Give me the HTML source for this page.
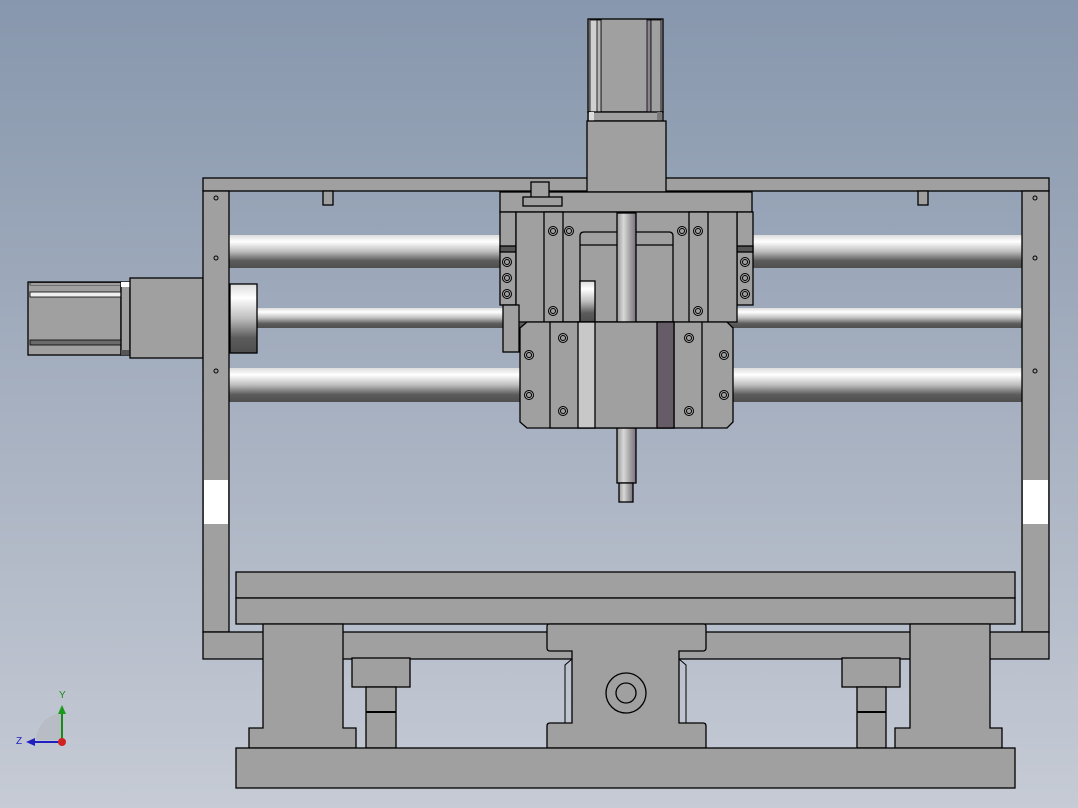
<!DOCTYPE html>
<html><head><meta charset="utf-8"><style>
html,body{margin:0;padding:0;width:1078px;height:808px;overflow:hidden}
svg{display:block}
</style></head><body>
<svg width="1078" height="808" viewBox="0 0 1078 808" xmlns="http://www.w3.org/2000/svg" font-family="Liberation Sans, sans-serif">
<defs>
<linearGradient id="bg" x1="0" y1="0" x2="0" y2="1">
<stop offset="0" stop-color="#8797ad"/><stop offset="0.5" stop-color="#a6b0c0"/><stop offset="1" stop-color="#c6cbd5"/>
</linearGradient>
<linearGradient id="rod" x1="0" y1="0" x2="0" y2="1">
<stop offset="0" stop-color="#dcdcdc"/><stop offset="0.2" stop-color="#ffffff"/><stop offset="0.5" stop-color="#bdbdbd"/><stop offset="0.78" stop-color="#5c5c5c"/><stop offset="1" stop-color="#4e4e4e"/>
</linearGradient>
<linearGradient id="shaft" x1="0" y1="0" x2="1" y2="0">
<stop offset="0" stop-color="#9a9a9a"/><stop offset="0.35" stop-color="#d8d8d8"/><stop offset="0.7" stop-color="#a0a0a0"/><stop offset="1" stop-color="#7a7080"/>
</linearGradient>
<g id="s" fill="none" stroke="#000" stroke-width="1"><circle r="4.5"/><circle r="2.5"/></g>
</defs>
<rect width="1078" height="808" fill="url(#bg)"/>
<g stroke="#000" stroke-width="1.3" fill="#a0a0a0">
<rect x="229" y="235" width="793" height="33" fill="url(#rod)" stroke="none"/>
<rect x="229" y="308" width="793" height="20" fill="url(#rod)" stroke="none"/>
<rect x="229" y="368" width="793" height="34" fill="url(#rod)" stroke="none"/>
<!-- left motor -->
<rect x="28" y="282" width="93" height="73"/>
<rect x="30" y="283" width="91" height="2" fill="#e0e0e0" stroke-width="0.6"/>
<rect x="30" y="292" width="91" height="5" fill="#f0f0f0" stroke-width="0.8"/>
<rect x="30" y="340" width="91" height="5" fill="#6a6a6a" stroke-width="0.8"/>
<rect x="121" y="282" width="9" height="73" fill="#a0a0a0"/>
<rect x="121" y="282" width="9" height="5" fill="#fff" stroke="none"/>
<rect x="121" y="350" width="9" height="5" fill="#555" stroke="none"/>
<rect x="130" y="278" width="73" height="80"/>
<rect x="230" y="284" width="27" height="69" fill="url(#rod)"/>
<!-- frame -->
<rect x="203" y="178" width="846" height="13"/>
<rect x="203" y="191" width="26" height="441"/>
<rect x="1022" y="191" width="27" height="441"/>
<rect x="204" y="480" width="24" height="44" fill="#fff" stroke="none"/>
<rect x="1023" y="480" width="25" height="44" fill="#fff" stroke="none"/>
<rect x="203" y="632" width="846" height="27"/>
<rect x="323" y="191" width="10" height="14"/>
<rect x="918" y="191" width="10" height="14"/>
<!-- top motor -->
<rect x="588" y="19" width="75" height="93"/>
<rect x="590" y="20" width="11" height="92" fill="#d0d0d0" stroke-width="0.8"/>
<rect x="597" y="20" width="4" height="92" fill="#b8b8b8" stroke-width="0.8"/>
<rect x="647" y="20" width="4" height="92" fill="#8a8490" stroke-width="0.8"/>
<rect x="651" y="20" width="10" height="92" fill="#a0a0a0" stroke-width="0.8"/>
<rect x="588" y="112" width="75" height="9" fill="#a0a0a0"/>
<rect x="589" y="112" width="5" height="9" fill="#ddd" stroke="none"/>
<rect x="657" y="112" width="5" height="9" fill="#777" stroke="none"/>
<rect x="587" y="121" width="79" height="71"/>
<!-- carriage -->
<rect x="500" y="192" width="252" height="20"/>
<rect x="531" y="182" width="18" height="16"/>
<rect x="523" y="197" width="39" height="9"/>
<rect x="500" y="212" width="16" height="93"/>
<rect x="500" y="246" width="16" height="6" fill="#555"/>
<rect x="737" y="212" width="16" height="93"/>
<rect x="737" y="246" width="16" height="6" fill="#555"/>
<rect x="516" y="212" width="221" height="110"/>
<path d="M580 322 V236 Q580 232 584 232 H669 Q673 232 673 236 V322" fill="none"/>
<line x1="580" y1="245" x2="673" y2="245"/>
<rect x="580" y="281" width="15" height="41" fill="url(#rod)"/>
<rect x="544" y="212" width="19" height="110"/>
<rect x="689" y="212" width="19" height="110"/>
<rect x="503" y="305" width="16" height="47"/>
<rect x="617" y="213" width="19" height="270" fill="url(#shaft)"/>
<rect x="619" y="483" width="14" height="19" fill="url(#shaft)"/>
<path d="M527 322 H727 L733 328 V422 L727 428 H527 L520 422 V328 Z"/>
<rect x="550" y="322" width="124" height="106" fill="#a0a0a0"/>
<rect x="578" y="322" width="17" height="106" fill="#c8c8c8"/>
<rect x="657" y="322" width="17" height="106" fill="#665c68"/>
<line x1="702" y1="322" x2="702" y2="428"/>
<!-- table -->
<rect x="236" y="572" width="779" height="26"/>
<rect x="236" y="598" width="779" height="26"/>
<path d="M263 624 H343 V728 H356 V748 H249 V728 H263 Z"/>
<path d="M910 624 H990 V728 H1002 V748 H895 V728 H910 Z"/>
<path d="M549 624 H704 Q706 624 706 627 V648 Q706 651 703 651 H679 V723 H703 Q706 723 706 726 V748 H547 V726 Q547 723 550 723 H572 V651 H550 Q547 651 547 648 V627 Q547 624 549 624 Z"/>
<path d="M572 659 L565 665 V723 M679 659 L686 665 V723" fill="none" stroke-width="1"/>
<ellipse cx="626" cy="693" rx="20" ry="20" fill="none"/>
<ellipse cx="626" cy="693" rx="10" ry="10" fill="none"/>
<rect x="352" y="658" width="58" height="29"/>
<rect x="366" y="687" width="30" height="61"/>
<line x1="366" y1="712" x2="396" y2="712" stroke-width="2"/>
<rect x="842" y="658" width="58" height="29"/>
<rect x="857" y="687" width="29" height="61"/>
<line x1="857" y1="712" x2="886" y2="712" stroke-width="2"/>
<rect x="236" y="748" width="779" height="40"/>
</g>
<g fill="none" stroke="#000" stroke-width="1">
<circle cx="216" cy="198" r="2"/><circle cx="216" cy="258" r="2"/><circle cx="216" cy="371" r="2"/>
<circle cx="1035" cy="198" r="2"/><circle cx="1035" cy="258" r="2"/><circle cx="1035" cy="371" r="2"/>
</g>
<use href="#s" x="507" y="262"/><use href="#s" x="507" y="278"/><use href="#s" x="507" y="294"/>
<use href="#s" x="745" y="262"/><use href="#s" x="745" y="278"/><use href="#s" x="745" y="294"/>
<use href="#s" x="553" y="231"/><use href="#s" x="569" y="231"/><use href="#s" x="553" y="311"/>
<use href="#s" x="682" y="231"/><use href="#s" x="698" y="231"/><use href="#s" x="698" y="311"/>
<use href="#s" x="529" y="355"/><use href="#s" x="529" y="395"/><use href="#s" x="724" y="355"/><use href="#s" x="724" y="395"/>
<use href="#s" x="563" y="338"/><use href="#s" x="563" y="411"/><use href="#s" x="689" y="338"/><use href="#s" x="689" y="411"/>
<path d="M36 740 A28 28 0 0 1 62 713 V740 Z" fill="#b8bcc4"/>
<line x1="62" y1="742" x2="62" y2="712" stroke="#1a8a1a" stroke-width="2"/>
<path d="M58 714 L62 705 L66 714 Z" fill="#1a9a1a"/>
<line x1="62" y1="742" x2="34" y2="742" stroke="#2020c0" stroke-width="2"/>
<path d="M35 738 L26 742 L35 746 Z" fill="#2020c0"/>
<circle cx="62" cy="742" r="4" fill="#d02020"/>
<text x="59" y="698" font-size="10" fill="#1a8a1a">Y</text>
<text x="16" y="744" font-size="10" fill="#2020c0">Z</text>
</svg>
</body></html>
